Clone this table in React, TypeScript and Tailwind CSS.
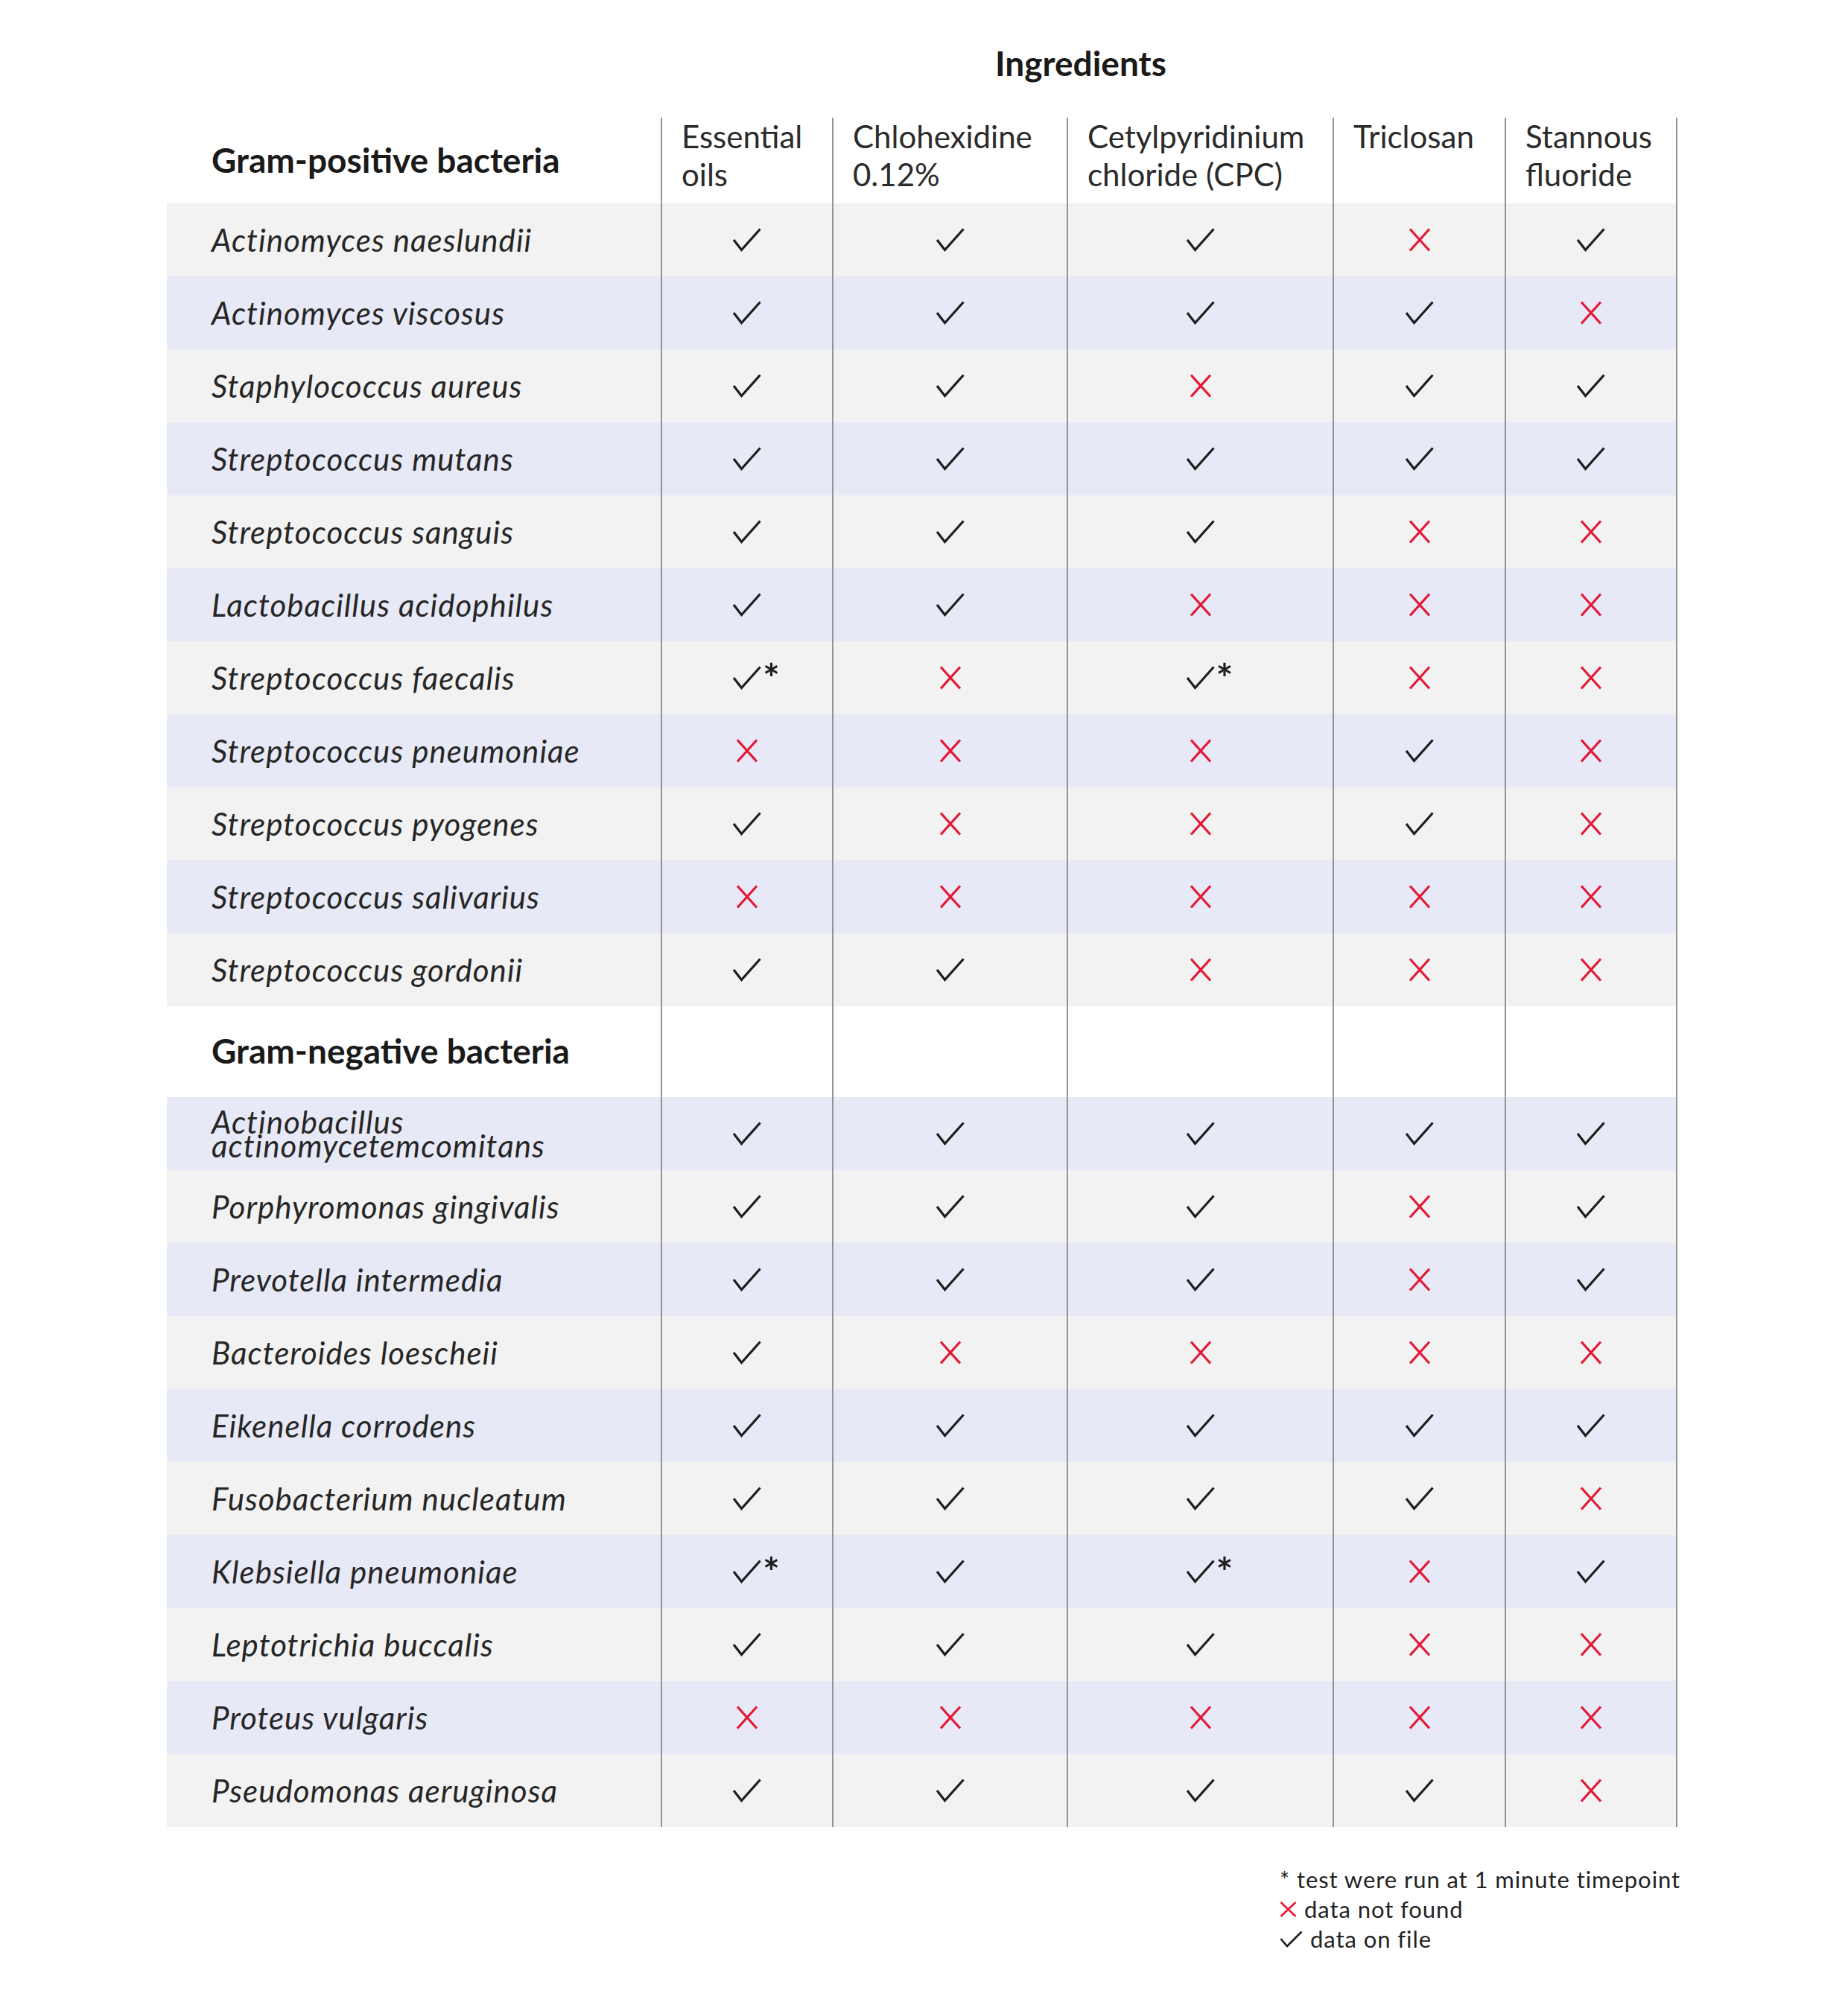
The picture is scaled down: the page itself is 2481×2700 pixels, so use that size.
import { FC } from 'react'

type Mark = 'y' | 'n' | 's'

interface Bacterium {
  name: string
  marks: Mark[]
  wrap?: boolean
}

const positive: Bacterium[] = [
  { name: 'Actinomyces naeslundii', marks: ['y', 'y', 'y', 'n', 'y'] },
  { name: 'Actinomyces viscosus', marks: ['y', 'y', 'y', 'y', 'n'] },
  { name: 'Staphylococcus aureus', marks: ['y', 'y', 'n', 'y', 'y'] },
  { name: 'Streptococcus mutans', marks: ['y', 'y', 'y', 'y', 'y'] },
  { name: 'Streptococcus sanguis', marks: ['y', 'y', 'y', 'n', 'n'] },
  { name: 'Lactobacillus acidophilus', marks: ['y', 'y', 'n', 'n', 'n'] },
  { name: 'Streptococcus faecalis', marks: ['s', 'n', 's', 'n', 'n'] },
  { name: 'Streptococcus pneumoniae', marks: ['n', 'n', 'n', 'y', 'n'] },
  { name: 'Streptococcus pyogenes', marks: ['y', 'n', 'n', 'y', 'n'] },
  { name: 'Streptococcus salivarius', marks: ['n', 'n', 'n', 'n', 'n'] },
  { name: 'Streptococcus gordonii', marks: ['y', 'y', 'n', 'n', 'n'] },
]

const negative: Bacterium[] = [
  { name: 'Actinobacillus actinomycetemcomitans', marks: ['y', 'y', 'y', 'y', 'y'], wrap: true },
  { name: 'Porphyromonas gingivalis', marks: ['y', 'y', 'y', 'n', 'y'] },
  { name: 'Prevotella intermedia', marks: ['y', 'y', 'y', 'n', 'y'] },
  { name: 'Bacteroides loescheii', marks: ['y', 'n', 'n', 'n', 'n'] },
  { name: 'Eikenella corrodens', marks: ['y', 'y', 'y', 'y', 'y'] },
  { name: 'Fusobacterium nucleatum', marks: ['y', 'y', 'y', 'y', 'n'] },
  { name: 'Klebsiella pneumoniae', marks: ['s', 'y', 's', 'n', 'y'] },
  { name: 'Leptotrichia buccalis', marks: ['y', 'y', 'y', 'n', 'n'] },
  { name: 'Proteus vulgaris', marks: ['n', 'n', 'n', 'n', 'n'] },
  { name: 'Pseudomonas aeruginosa', marks: ['y', 'y', 'y', 'y', 'n'] },
]

const colClass = [
  'w-[230px] border-l-2',
  'w-[315px] border-l-2',
  'w-[357px] border-l-2',
  'w-[231px] border-l-2',
  'w-[232px] border-x-2',
]

const Check: FC<{ small?: boolean }> = ({ small }) =>
  small ? (
    <svg width="31" height="23" viewBox="0 0 31 23" className="shrink-0">
      <polyline points="1.5,11 10,21 29.5,1.5" fill="none" stroke="#1e1e1e" strokeWidth="2.6" />
    </svg>
  ) : (
    <svg width="40" height="32" viewBox="0 0 40 32" className="shrink-0">
      <polyline points="2,16 12.5,29.5 37.5,1.5" fill="none" stroke="#1e1e1e" strokeWidth="3.2" />
    </svg>
  )

const Cross: FC<{ small?: boolean }> = ({ small }) =>
  small ? (
    <svg width="23" height="21" viewBox="0 0 23 21" className="shrink-0">
      <path d="M1.5 1 L21.5 20 M21.5 1 L1.5 20" fill="none" stroke="#e31837" strokeWidth="2.6" />
    </svg>
  ) : (
    <svg width="30" height="32" viewBox="0 0 30 32" className="shrink-0">
      <path d="M2 1.5 L28 30.5 M28 1.5 L2 30.5" fill="none" stroke="#e31837" strokeWidth="3.2" />
    </svg>
  )

const MarkCell: FC<{ mark: Mark }> = ({ mark }) => {
  if (mark === 'n') return <Cross />
  return (
    <span className="relative flex">
      <Check />
      {mark === 's' && (
        <span className="absolute left-full top-[-11px] ml-[1px] text-[54px] leading-none font-bold text-[#1e1e1e]">
          *
        </span>
      )}
    </span>
  )
}

const Row: FC<{ item: Bacterium; index: number }> = ({ item, index }) => (
  <div className={`flex h-[98px] ${index % 2 === 0 ? 'bg-[#f2f2f2]' : 'bg-[#e8e9f6]'}`}>
    <div
      className={`w-[663px] flex items-center pl-[60px] italic text-[42px] tracking-[0.025em] text-[#262626] ${
        item.wrap ? 'leading-[32px]' : ''
      }`}>
      {item.wrap ? (
        <span>
          Actinobacillus
          <br />
          actinomycetemcomitans
        </span>
      ) : (
        item.name
      )}
    </div>
    {item.marks.map((m, i) => (
      <div key={i} className={`${colClass[i]} border-[#939393] flex items-center justify-center`}>
        <MarkCell mark={m} />
      </div>
    ))}
  </div>
)

const GroupHeader: FC<{ title: string; height: string; children?: React.ReactNode }> = ({
  title,
  height,
  children,
}) => (
  <div className={`flex bg-white ${height}`}>
    <div className="w-[663px] flex items-center pl-[60px] pb-[4px] text-[46px] font-bold text-[#1a1a1a]">
      {title}
    </div>
    {children ??
      colClass.map((c, i) => <div key={i} className={`${c} border-[#939393]`} />)}
  </div>
)

const headers = [
  ['Essential', 'oils'],
  ['Chlohexidine', '0.12%'],
  ['Cetylpyridinium', 'chloride (CPC)'],
  ['Triclosan', ''],
  ['Stannous', 'fluoride'],
]

export default function App() {
  return (
    <div className="min-h-screen bg-white font-['Lato',sans-serif] text-[#262626]">
      <div className="pt-[57px] pl-[1336px] text-[46px] leading-[55px] font-bold text-[#1a1a1a]">
        Ingredients
      </div>

      <div className="mt-[48px] ml-[224px] w-fit">
        <GroupHeader title="Gram-positive bacteria" height="h-[113px]">
          {headers.map((h, i) => (
            <div
              key={i}
              className={`${colClass[i]} border-[#939393] pl-[26px] -mt-[2px] text-[42px] leading-[51px] text-[#2b2b2b]`}>
              {h[0]}
              <br />
              {h[1]}
            </div>
          ))}
        </GroupHeader>

        {positive.map((item, index) => (
          <Row key={item.name} item={item} index={index} />
        ))}

        <GroupHeader title="Gram-negative bacteria" height="h-[122px]" />

        {negative.map((item, index) => (
          <Row key={item.name} item={item} index={index + 1} />
        ))}
      </div>

      <div className="mt-[50px] ml-[1718px] text-[31px] leading-[40px] tracking-[0.03em] text-[#222]">
        <div>* test were run at 1 minute timepoint</div>
        <div className="flex items-center gap-[10px]">
          <Cross small />
          <span>data not found</span>
        </div>
        <div className="flex items-center gap-[10px]">
          <Check small />
          <span>data on file</span>
        </div>
      </div>
    </div>
  )
}
